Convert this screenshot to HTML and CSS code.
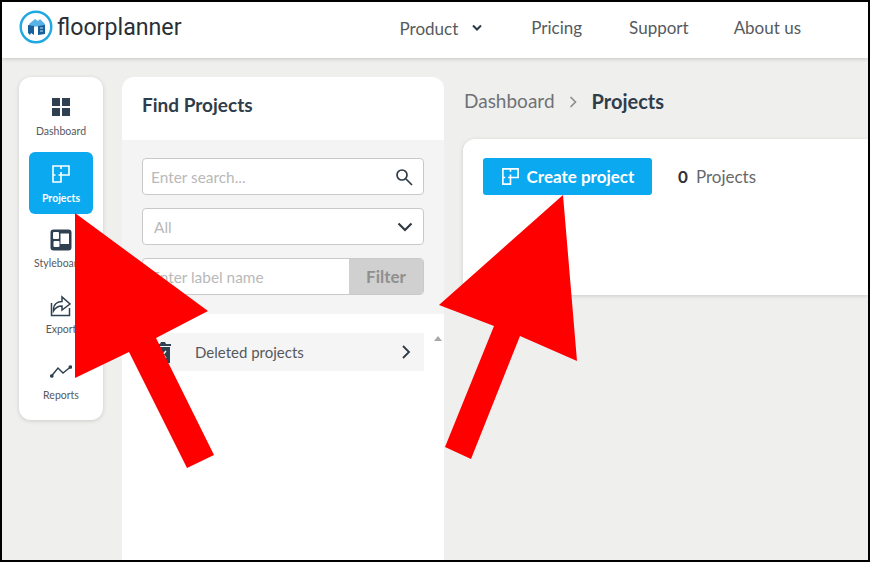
FILE: index.html
```html
<!DOCTYPE html>
<html lang="en">
<head>
    <meta charset="UTF-8">
    <meta name="viewport" content="width=device-width, initial-scale=1.0">
    <title>Floorplanner - Projects</title>
    <link rel="stylesheet" href="styles.css">
</head>
<body>
    <div class="frame">
        <header class="topbar">
            <a class="logo">
                <svg width="34" height="34" viewBox="0 0 34 34">
                    <circle cx="17" cy="17" r="15.3" fill="#fff" stroke="#1ea7e1" stroke-width="2.4"/>
                    <path d="M10 14l6-5 3 2 2-2 5 5v2l-16 1z" fill="#58b4e6"/>
                    <path d="M9 15l6 1v9l-3-2-1 2-2-2zM19 16l7-1v9l-7 1z" fill="#17609c"/>
                    <path d="M21 18h3M21 21h3" stroke="#bfe3f5" stroke-width="1"/>
                </svg>
                <span>floorplanner</span>
            </a>
            <nav class="mainnav">
                <a class="nav-product">Product
                    <svg width="12" height="8" viewBox="0 0 12 8"><path d="M2 1.500l4 4 4-4" fill="none" stroke="#2b3a45" stroke-width="2"/></svg>
                </a>
                <a class="nav-pricing">Pricing</a>
                <a class="nav-support">Support</a>
                <a>About us</a>
            </nav>
        </header>

        <div class="workspace">
            <aside class="sidebar">
                <a class="side-item side-first">
                    <svg width="20" height="20" viewBox="0 0 20 20" fill="#2f4050"><rect x="1" y="1" width="8" height="8"/><rect x="11" y="1" width="8" height="8"/><rect x="1" y="11" width="8" height="8"/><rect x="11" y="11" width="8" height="8"/></svg>
                    <span>Dashboard</span>
                </a>
                <a class="side-item active">
                    <svg width="20" height="20" viewBox="0 0 20 20" fill="none" stroke="#fff" stroke-width="1.600"><path d="M2 2h16v9h-8v7H2zM10 2v3M10 8v3M2 11h2.500M7.500 11H10"/></svg>
                    <span>Projects</span>
                </a>
                <a class="side-item">
                    <svg width="22" height="22" viewBox="0 0 22 22"><rect x="0.500" y="0.500" width="21" height="21" rx="3" fill="#2f4050"/><rect x="3" y="3" width="6" height="7" rx="1" fill="#fff"/><rect x="10.500" y="4.500" width="8.500" height="10.500" fill="#fff"/><rect x="3.500" y="12" width="6" height="6" rx="1" fill="#fff"/></svg>
                    <span>Styleboards</span>
                </a>
                <a class="side-item">
                    <svg width="22" height="22" viewBox="0 0 22 22" fill="none" stroke="#2f4050" stroke-width="1.500"><path d="M1.500 8v12.500h18V13"/><path d="M3.500 15c0-6 4-8.500 8.500-8.500V2l8 7-8 6v-4c-4 0-6.500 1.500-8.500 5z"/></svg>
                    <span>Export</span>
                </a>
                <a class="side-item">
                    <svg width="22" height="22" viewBox="0 0 22 22" fill="none" stroke="#2f4050" stroke-width="1.500"><path d="M1.500 15L8 7l5 5 7.500-6"/><circle cx="1.800" cy="15" r="1.100" fill="#2f4050"/><circle cx="20.300" cy="6" r="1.100" fill="#2f4050"/></svg>
                    <span>Reports</span>
                </a>
            </aside>

            <section class="finder">
                <h2>Find Projects</h2>
                <div class="filters">
                    <div class="field">
                        <span class="placeholder">Enter search...</span>
                        <svg width="18" height="18" viewBox="0 0 18 18" fill="none" stroke="#2f3a44" stroke-width="1.700"><circle cx="7" cy="7" r="5"/><path d="M11 11l6 6"/></svg>
                    </div>
                    <div class="field">
                        <span class="placeholder select-value">All</span>
                        <svg width="16" height="10" viewBox="0 0 16 10" fill="none" stroke="#2f3a44" stroke-width="2.200"><path d="M1.500 1.500L8 8l6.500-6.500"/></svg>
                    </div>
                    <div class="label-filter">
                        <span class="placeholder">Enter label name</span>
                        <span class="filter-btn">Filter</span>
                    </div>
                </div>
                <div class="folder-list">
                    <div class="folder-row">
                        <svg width="18" height="22" viewBox="0 0 18 22" fill="#2f4050"><path d="M1 3h5l1-2h4l1 2h5v2H1zM2 6h14v16H2z"/><path d="M6 10l6 7M12 10l-6 7" stroke="#f5f5f5" stroke-width="1.500"/></svg>
                        <span class="folder-name">Deleted projects</span>
                        <svg width="10" height="14" viewBox="0 0 10 14" fill="none" stroke="#2f3a44" stroke-width="1.800"><path d="M2 1l6 6-6 6"/></svg>
                    </div>
                    <span class="scroll-up"></span>
                </div>
            </section>

            <main class="content">
                <div class="crumbs">
                    <span class="crumb">Dashboard</span>
                    <svg width="9" height="12" viewBox="0 0 9 12" fill="none" stroke="#8c8c8c" stroke-width="1.600"><path d="M1.500 1l5 5-5 5"/></svg>
                    <strong>Projects</strong>
                </div>
                <div class="card">
                    <a class="create-btn">
                        <svg width="19" height="19" viewBox="0 0 20 20" fill="none" stroke="#fff" stroke-width="1.700"><path d="M2 2h16v9h-8v7H2zM10 2v3M10 8v3M2 11h2.500M7.500 11H10"/></svg>
                        Create project
                    </a>
                    <span class="count"><b>0</b>Projects</span>
                </div>
            </main>
        </div>

        <!-- red annotation arrows -->
        <svg class="arrows" width="870" height="562" viewBox="0 0 870 562">
            <polygon fill="#fe0000" points="75,213 208,311 156,338 214,455 187,468 129,352 75,378"/>
            <polygon fill="#fe0000" points="563,195 577,361 520,336 471,459 445,447 494,326 439,305"/>
        </svg>
    </div>
</body>
</html>
```

FILE: styles.css
```css
* {
    box-sizing: border-box;
}
html, body {
    margin: 0;
    height: 100%;
}
body {
    font-family: "Lato", Arial, sans-serif;
    background-color: #000;
    overflow: hidden;
}
.frame {
    position: relative;
    height: 100%;
    margin: 0 2px;
    padding: 2px 0;
    display: flex;
    flex-direction: column;
}
.topbar {
    height: 56px;
    flex: none;
    background: white;
    box-shadow: 0 1px 4px rgba(0,0,0,0.18);
    display: flex;
    align-items: center;
    position: relative;
    z-index: 1;
}
.logo {
    display: flex;
    align-items: center;
    margin: 0 0 7px 17px;
    gap: 4px;
    font-family: "Roboto", Arial, sans-serif;
    font-size: 23.200px;
    color: #2a2f36;
}
.mainnav {
    display: flex;
    align-items: center;
    margin: 0 0 5px 218px;
    font-size: 17px;
    color: #565a5e;
}
.mainnav a {
    display: flex;
    align-items: center;
}
.nav-product {
    margin: 1px 48px 0 0;
    gap: 13px;
}
.nav-pricing {
    margin-right: 47px;
}
.nav-support {
    margin-right: 45px;
}
.workspace {
    flex: 1;
    min-height: 0;
    background-color: #efefee;
    display: flex;
    align-items: flex-start;
    padding: 19px 0 0 17px;
}
.sidebar {
    width: 84px;
    height: 343px;
    flex: none;
    background: white;
    border-radius: 12px;
    box-shadow: 0 1px 4px rgba(0,0,0,0.15);
    padding: 9px 10px 4px;
    display: flex;
    flex-direction: column;
}
.side-item {
    height: 66px;
    flex: none;
    border-radius: 6px;
    display: flex;
    flex-direction: column;
    align-items: center;
    justify-content: center;
    gap: 6px;
    padding-bottom: 5px;
    font-size: 10.500px;
    color: #55595d;
}
.side-first {
    gap: 8px;
}
.side-item.active {
    background-color: #0aa9f0;
    color: white;
    font-weight: 700;
    height: 62px;
    margin-bottom: 4px;
    padding: 1px 0 0;
    gap: 8px;
}
.finder {
    width: 322px;
    height: 483px;
    margin-left: 19px;
    flex: none;
    background: white;
    border-radius: 12px 12px 0 0;
    display: flex;
    flex-direction: column;
}
.finder h2 {
    margin: 0;
    height: 63px;
    padding: 16px 20px 0;
    font-size: 19px;
    font-weight: 700;
    color: #2f3d4a;
}
.filters {
    background-color: #f4f4f4;
    height: 174px;
    padding: 18px 20px 0;
    display: flex;
    flex-direction: column;
    gap: 13px;
}
.field {
    height: 37px;
    background: white;
    border: 1px solid #c9c9c9;
    border-radius: 4px;
    padding: 0 10px 0 8px;
    display: flex;
    align-items: center;
    justify-content: space-between;
}
.placeholder {
    font-size: 15.400px;
    color: #b9b9b9;
}
.select-value {
    margin-left: 3px;
}
.label-filter {
    height: 37px;
    background: white;
    border: 1px solid #c9c9c9;
    border-radius: 4px;
    padding-left: 8px;
    display: flex;
    align-items: center;
    justify-content: space-between;
    overflow: hidden;
}
.filter-btn {
    width: 74px;
    height: 36px;
    background-color: #d0d0d0;
    color: #8f8f8f;
    font-size: 17px;
    font-weight: 700;
    display: flex;
    align-items: center;
    justify-content: center;
}
.folder-list {
    flex: 1;
    position: relative;
    padding: 19px 20px 0;
}
.folder-row {
    height: 38px;
    background-color: #f5f5f5;
    display: flex;
    align-items: center;
    padding: 0 13px 0 12px;
    color: #55595d;
    font-size: 15px;
}
.folder-name {
    flex: 1;
    margin: 0 0 1px 23px;
}
.scroll-up {
    position: absolute;
    top: 22px;
    right: 2px;
    border: 4px solid transparent;
    border-top: 0;
    border-bottom: 5px solid #a8a8a8;
}
.content {
    flex: 1;
    min-width: 0;
    margin-left: 19px;
}
.crumbs {
    height: 62px;
    padding-top: 12px;
    display: flex;
    align-items: flex-start;
    gap: 14px;
    font-size: 19px;
    line-height: 24px;
}
.crumbs svg {
    margin-top: 7px;
}
.crumb {
    color: #6f7275;
    margin-left: 1px;
}
.crumbs strong {
    color: #2f3d4a;
    font-size: 20px;
}
.card {
    height: 156px;
    background: white;
    border-radius: 12px 0 0 12px;
    box-shadow: 0 1px 4px rgba(0,0,0,0.15);
    padding: 19px 20px;
    display: flex;
    align-items: flex-start;
}
.create-btn {
    width: 169px;
    height: 37px;
    background-color: #0aa9f0;
    color: white;
    border-radius: 3px;
    font-size: 17px;
    font-weight: 700;
    display: flex;
    align-items: center;
    justify-content: center;
    gap: 7px;
}
.count {
    margin-left: 26px;
    height: 37px;
    display: flex;
    align-items: center;
    color: #66696c;
    font-size: 17px;
}
.count b {
    color: #2f3338;
    margin-right: 8px;
}
.arrows {
    position: absolute;
    left: -2px;
    top: 0;
    z-index: 2;
    pointer-events: none;
}
```
